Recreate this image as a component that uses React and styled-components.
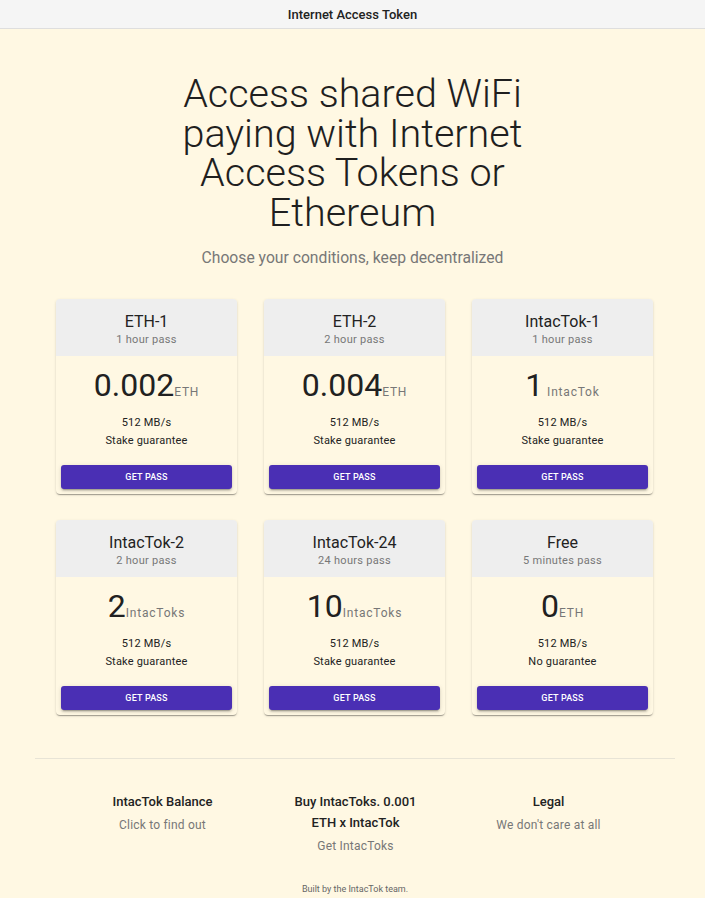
import React from "react";
import styled, { createGlobalStyle } from "styled-components";

const GlobalStyle = createGlobalStyle`
  body {
    margin: 0;
    background: #fff8e3;
    font-family: Roboto, "Liberation Sans", sans-serif;
    color: #212121;
  }
`;

const TopBar = styled.header`
  height: 28px;
  background: #f5f5f5;
  border-bottom: 1px solid #dedede;
  display: flex;
  align-items: center;
  justify-content: center;
  font-size: 13px;
  font-weight: 500;
  color: #222;
`;

const Hero = styled.section`
  display: flex;
  flex-direction: column;
  align-items: center;
  padding-top: 45px;
`;

const Headline = styled.h1`
  margin: 0;
  max-width: 350px;
  text-align: center;
  font-size: 39.5px;
  line-height: 39.5px;
  font-weight: 300;
  color: #1f1f1f;
`;

const Subtitle = styled.p`
  margin: 14px 0 0;
  font-size: 15.7px;
  line-height: 24px;
  color: #777;
`;

const Grid = styled.div`
  display: grid;
  grid-template-columns: repeat(3, 181px);
  column-gap: 27px;
  row-gap: 26px;
  justify-content: center;
  margin: 29px 0 0;
  padding-left: 4px;
`;

const Card = styled.div`
  display: flex;
  flex-direction: column;
  border-radius: 4px;
  overflow: hidden;
  box-shadow: 0 2px 1px -1px rgba(0, 0, 0, 0.2), 0 1px 1px 0 rgba(0, 0, 0, 0.14),
    0 1px 3px 0 rgba(0, 0, 0, 0.12);
`;

const CardHeader = styled.div`
  background: #eeeeee;
  padding: 13px 16px 8px;
  text-align: center;
`;

const CardTitle = styled.div`
  font-size: 16px;
  line-height: 20px;
  color: #222;
`;

const CardSub = styled.div`
  font-size: 11px;
  line-height: 16px;
  color: #777;
  letter-spacing: 0.3px;
`;

const CardBody = styled.div`
  padding: 9px 5px 5px;
  text-align: center;
`;

const Price = styled.div`
  font-size: 32px;
  line-height: 40px;
  color: #212121;
`;

const Unit = styled.span`
  font-size: 12px;
  line-height: 1;
  color: #777;
  letter-spacing: 0.8px;
`;

const Features = styled.div`
  margin-top: 9px;
  font-size: 11px;
  line-height: 18px;
  color: #222;
  letter-spacing: 0.2px;
`;

const PassButton = styled.button`
  margin-top: 15px;
  width: 100%;
  height: 24px;
  border: 0;
  border-radius: 3px;
  background: #4a2fb4;
  color: #fff;
  font-family: Roboto, "Liberation Sans", sans-serif;
  font-size: 9px;
  font-weight: 500;
  letter-spacing: 0.2px;
  text-transform: uppercase;
  cursor: pointer;
  box-shadow: 0 3px 1px -2px rgba(0, 0, 0, 0.2), 0 2px 2px 0 rgba(0, 0, 0, 0.14),
    0 1px 5px 0 rgba(0, 0, 0, 0.12);
`;

const Footer = styled.footer`
  margin: 43px 30px 0 35px;
  border-top: 1px solid #e8e4d6;
  padding-top: 32px;
`;

const FooterCols = styled.div`
  display: grid;
  grid-template-columns: 192px 194px 192px;
  justify-content: center;
  padding-left: 1px;
`;

const FooterCol = styled.div`
  padding: 0 28px;
  text-align: center;
`;

const FooterTitle = styled.div`
  font-size: 13px;
  line-height: 21px;
  font-weight: 500;
  color: #222;
`;

const FooterLink = styled.div`
  margin-top: 3px;
  font-size: 12px;
  line-height: 21px;
  color: #777;
  letter-spacing: 0.2px;
`;

const Credit = styled.div`
  margin-top: 25px;
  text-align: center;
  font-size: 9px;
  line-height: 14px;
  color: #666;
`;

const plans = [
  { title: "ETH-1", sub: "1 hour pass", price: "0.002", unit: "ETH", guarantee: "Stake guarantee" },
  { title: "ETH-2", sub: "2 hour pass", price: "0.004", unit: "ETH", guarantee: "Stake guarantee" },
  { title: "IntacTok-1", sub: "1 hour pass", price: "1", unit: " IntacTok", guarantee: "Stake guarantee" },
  { title: "IntacTok-2", sub: "2 hour pass", price: "2", unit: "IntacToks", guarantee: "Stake guarantee" },
  { title: "IntacTok-24", sub: "24 hours pass", price: "10", unit: "IntacToks", guarantee: "Stake guarantee" },
  { title: "Free", sub: "5 minutes pass", price: "0", unit: "ETH", guarantee: "No guarantee" },
];

const links = [
  { title: "IntacTok Balance", link: "Click to find out" },
  { title: "Buy IntacToks. 0.001 ETH x IntacTok", link: "Get IntacToks" },
  { title: "Legal", link: "We don't care at all" },
];

export default function App() {
  return (
    <>
      <GlobalStyle />
      <TopBar>Internet Access Token</TopBar>
      <Hero>
        <Headline>Access shared WiFi paying with Internet Access Tokens or Ethereum</Headline>
        <Subtitle>Choose your conditions, keep decentralized</Subtitle>
      </Hero>
      <Grid>
        {plans.map((plan) => (
          <Card key={plan.title}>
            <CardHeader>
              <CardTitle>{plan.title}</CardTitle>
              <CardSub>{plan.sub}</CardSub>
            </CardHeader>
            <CardBody>
              <Price>
                {plan.price}
                <Unit>{plan.unit}</Unit>
              </Price>
              <Features>
                <div>512 MB/s</div>
                <div>{plan.guarantee}</div>
              </Features>
              <PassButton>Get pass</PassButton>
            </CardBody>
          </Card>
        ))}
      </Grid>
      <Footer>
        <FooterCols>
          {links.map((item) => (
            <FooterCol key={item.title}>
              <FooterTitle>{item.title}</FooterTitle>
              <FooterLink>{item.link}</FooterLink>
            </FooterCol>
          ))}
        </FooterCols>
        <Credit>Built by the IntacTok team.</Credit>
      </Footer>
    </>
  );
}
